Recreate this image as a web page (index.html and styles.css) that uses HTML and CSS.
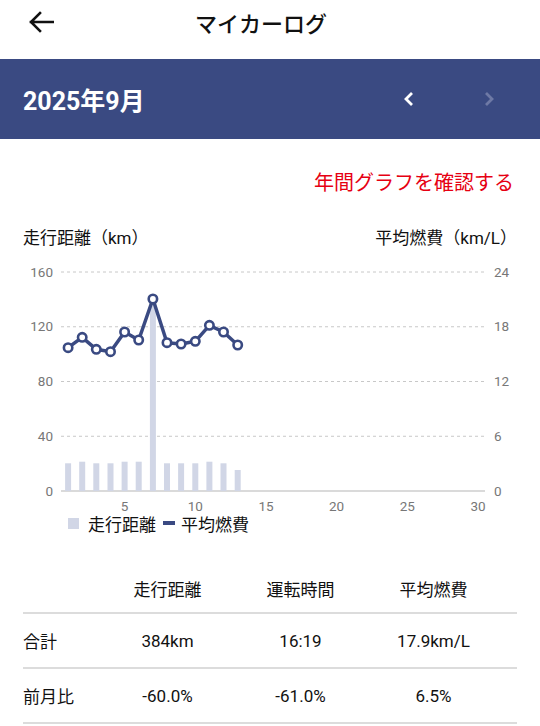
FILE: index.html
```html
<!DOCTYPE html>
<html lang="ja">
<head>
    <meta charset="UTF-8">
    <meta name="viewport" content="width=device-width, initial-scale=1.0">
    <title>マイカーログ</title>
    <link rel="stylesheet" href="styles.css">
</head>
<body>
    <header class="topbar">
        <div class="back">
            <svg width="26" height="22" viewBox="0 0 26 22"><path d="M25 11H3M12 2L3 11l9 9" fill="none" stroke="#111" stroke-width="2.6" stroke-linecap="square"/></svg>
        </div>
        <div class="title">マイカーログ</div>
        <div class="spacer"></div>
    </header>

    <div class="month-band">
        <div class="month">2025年9月</div>
        <div class="month-nav">
            <svg width="12" height="16" viewBox="0 0 12 16"><path d="M9 2L3 8l6 6" fill="none" stroke="#fff" stroke-width="2.8"/></svg>
            <svg class="disabled" width="12" height="16" viewBox="0 0 12 16"><path d="M3 2l6 6-6 6" fill="none" stroke="#6e79a5" stroke-width="2.8"/></svg>
        </div>
    </div>

    <div class="link-row"><a href="#">年間グラフを確認する</a></div>

    <div class="axis-titles">
        <span>走行距離（km）</span>
        <span>平均燃費（km/L）</span>
    </div>

    <svg class="chart" width="540" height="264" viewBox="0 0 540 264">
        <!-- grid -->
        <g stroke="#c8c8c8" stroke-dasharray="3 3" stroke-width="1">
            <line x1="61" y1="23" x2="485" y2="23"/>
            <line x1="61" y1="77.75" x2="485" y2="77.75"/>
            <line x1="61" y1="132.5" x2="485" y2="132.5"/>
            <line x1="61" y1="187.25" x2="485" y2="187.25"/>
        </g>
        <line x1="61" y1="242" x2="485" y2="242" stroke="#b5b5b5" stroke-width="1.2"/>

        <g class="tick" text-anchor="end">
            <text x="53" y="27.5">160</text>
            <text x="53" y="82.25">120</text>
            <text x="53" y="137">80</text>
            <text x="53" y="191.75">40</text>
            <text x="53" y="246.5">0</text>
        </g>
        <g class="tick" text-anchor="start">
            <text x="494" y="27.5">24</text>
            <text x="494" y="82.25">18</text>
            <text x="494" y="137">12</text>
            <text x="494" y="191.75">6</text>
            <text x="494" y="246.5">0</text>
        </g>
        <g class="tick" text-anchor="middle">
            <text x="124.6" y="262">5</text>
            <text x="195.3" y="262">10</text>
            <text x="266" y="262">15</text>
            <text x="336.6" y="262">20</text>
            <text x="407.3" y="262">25</text>
            <text x="478" y="262">30</text>
        </g>

        <!-- distance bars -->
        <g fill="#d1d6e6">
            <rect x="65.1" y="214.3" width="6" height="27.7"/>
            <rect x="79.2" y="212.7" width="6" height="29.3"/>
            <rect x="93.3" y="214.3" width="6" height="27.7"/>
            <rect x="107.5" y="214.3" width="6" height="27.7"/>
            <rect x="121.6" y="212.7" width="6" height="29.3"/>
            <rect x="135.7" y="212.7" width="6" height="29.3"/>
            <rect x="149.9" y="46" width="6" height="196"/>
            <rect x="164" y="214.3" width="6" height="27.7"/>
            <rect x="178.1" y="214.3" width="6" height="27.7"/>
            <rect x="192.3" y="214.3" width="6" height="27.7"/>
            <rect x="206.4" y="212.7" width="6" height="29.3"/>
            <rect x="220.5" y="214.3" width="6" height="27.7"/>
            <rect x="234.7" y="221" width="6" height="21"/>
        </g>

        <!-- fuel economy line -->
        <polyline fill="none" stroke="#3a4a82" stroke-width="3.5" stroke-linejoin="round"
            points="68.1,98.7 82.2,88.3 96.3,100.3 110.5,102.7 124.6,83 138.7,91 152.9,50 167,93.7 181.1,95 195.3,92.3 209.4,76.3 223.5,83 237.7,96"/>
        <g fill="#fff" stroke="#3a4a82" stroke-width="2.6">
            <circle cx="68.1" cy="98.7" r="4.2"/>
            <circle cx="82.2" cy="88.3" r="4.2"/>
            <circle cx="96.3" cy="100.3" r="4.2"/>
            <circle cx="110.5" cy="102.7" r="4.2"/>
            <circle cx="124.6" cy="83" r="4.2"/>
            <circle cx="138.7" cy="91" r="4.2"/>
            <circle cx="152.9" cy="50" r="4.2"/>
            <circle cx="167" cy="93.7" r="4.2"/>
            <circle cx="181.1" cy="95" r="4.2"/>
            <circle cx="195.3" cy="92.3" r="4.2"/>
            <circle cx="209.4" cy="76.3" r="4.2"/>
            <circle cx="223.5" cy="83" r="4.2"/>
            <circle cx="237.7" cy="96" r="4.2"/>
        </g>
    </svg>

    <div class="legend">
        <span class="swatch-bar"></span><span>走行距離</span>
        <span class="swatch-line"></span><span>平均燃費</span>
    </div>

    <div class="summary">
        <div class="row head">
            <div></div>
            <div>走行距離</div>
            <div>運転時間</div>
            <div>平均燃費</div>
        </div>
        <div class="row">
            <div class="label">合計</div>
            <div>384km</div>
            <div>16:19</div>
            <div>17.9km/L</div>
        </div>
        <div class="row">
            <div class="label">前月比</div>
            <div>-60.0%</div>
            <div>-61.0%</div>
            <div>6.5%</div>
        </div>
    </div>
</body>
</html>
```

FILE: styles.css
```css
body { margin: 0; background: #fff; color: #111; font-family: Roboto, "Noto Sans CJK JP", sans-serif; }
.topbar { display: flex; align-items: center; height: 44px; margin-bottom: 15px; }
.back { width: 60px; padding-left: 28px; box-sizing: border-box; display: flex; align-items: center; }
.title { flex: 1; text-align: center; font-size: 22px; font-weight: 500; }
.spacer { width: 78px; }
.month-band { display: flex; align-items: center; justify-content: space-between; height: 80px; padding: 0 23px; background: #3a4a82; }
.month { color: #fff; font-size: 25px; font-weight: 700; }
.month-nav { display: flex; gap: 68px; padding-right: 22px; }
.month-nav svg { display: block; }
.link-row { margin-top: 32px; padding-right: 26px; text-align: right; line-height: 24px; }
.link-row a { color: #e60012; text-decoration: none; font-size: 20px; }
.axis-titles { display: flex; justify-content: space-between; margin-top: 30px; padding: 0 23px; font-size: 17px; line-height: 22px; }
.chart { display: block; }
.tick { font-family: Roboto, sans-serif; font-size: 13.5px; fill: #777; }
.legend { display: flex; align-items: center; height: 20px; padding-left: 68px; font-size: 17px; }
.swatch-bar { width: 11px; height: 11px; background: #d1d6e6; margin-right: 9px; }
.swatch-line { width: 12px; height: 4px; background: #3a4a82; margin: 0 6px 0 7px; }
.summary { margin: 32px 23px 0; font-size: 17px; }
.row { display: grid; grid-template-columns: 78px 133px 133px 133px; align-items: center; height: 53px; border-bottom: 2px solid #dcdcdc; }
.row > div { text-align: center; }
.row > .label { text-align: left; }
.row.head { height: 47px; }
```
